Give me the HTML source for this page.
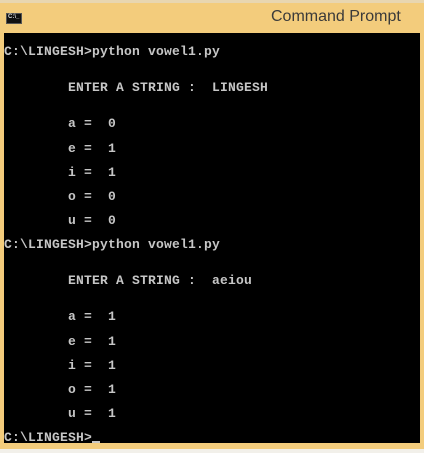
<!DOCTYPE html>
<html><head><style>
html,body{margin:0;padding:0;width:424px;height:453px;overflow:hidden;background:#f2f0ea;}
.frame{position:absolute;left:0;top:0;width:424px;height:449px;background:#f3cc7c;}
.top{position:absolute;left:0;top:0;width:424px;height:3px;background:#e8d6b0;}
.title{position:absolute;left:271px;top:8px;font:16px "Liberation Sans",sans-serif;color:#3a3a3a;}
.icon{position:absolute;left:6px;top:13px;width:14px;height:9px;background:#111;border:1px solid #555;}
.icon span{position:absolute;left:1px;top:0;font:bold 6px "Liberation Sans",sans-serif;color:#ddd;}
.con{position:absolute;left:4px;top:33px;width:416px;height:410px;background:#000;}
pre{position:absolute;left:4px;top:46px;margin:0;font:bold 13px/12.06px "Liberation Mono",monospace;letter-spacing:0.2px;color:#c6c6c6;}
.cur{display:inline-block;width:8px;height:2px;background:#c6c6c6;vertical-align:-2px;}
</style></head><body>
<div class="frame"></div><div class="top"></div>
<div class="icon"><span>C:\_</span></div>
<div class="title">Command Prompt</div>
<div class="con"></div>
<pre>C:\LINGESH&gt;python vowel1.py


        ENTER A STRING :  LINGESH


        a =  0

        e =  1

        i =  1

        o =  0

        u =  0

C:\LINGESH&gt;python vowel1.py


        ENTER A STRING :  aeiou


        a =  1

        e =  1

        i =  1

        o =  1

        u =  1

C:\LINGESH&gt;<span class="cur"></span></pre>
</body></html>
